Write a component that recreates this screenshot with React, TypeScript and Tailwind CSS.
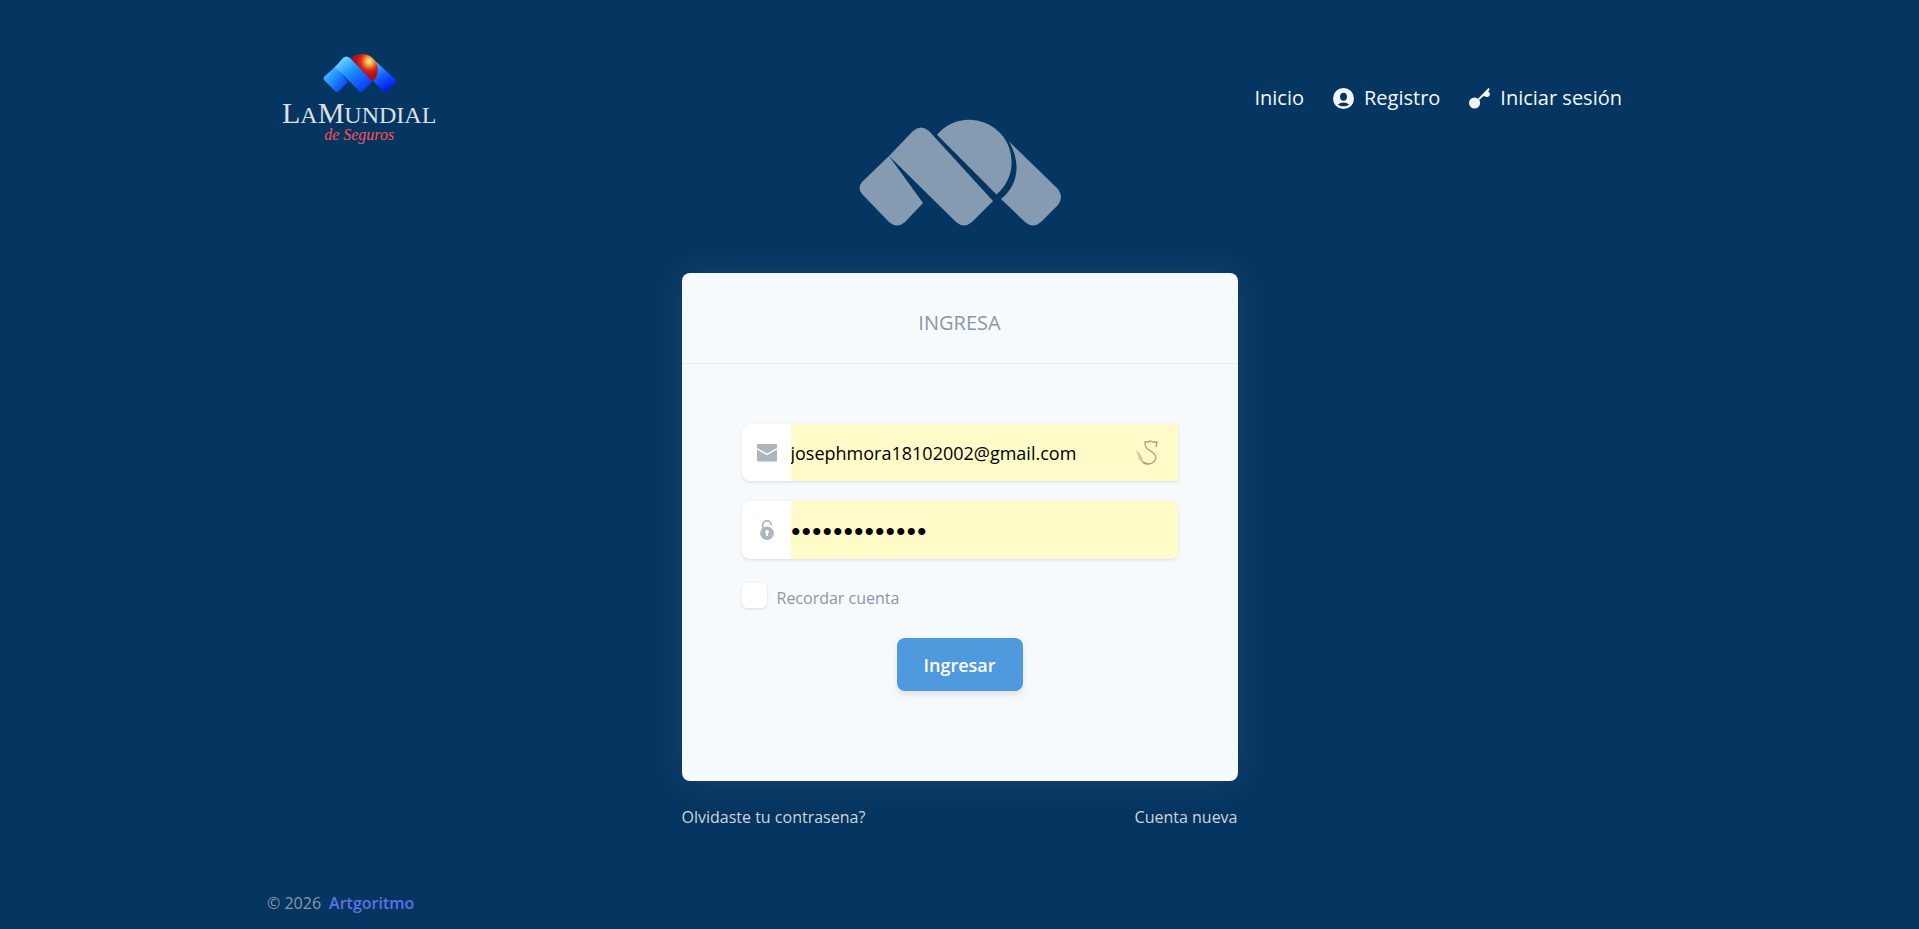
import React from "react";

function MundialLogo() {
  return (
    <a href="#" aria-label="La Mundial de Seguros" className="flex flex-col items-center">
      <svg viewBox="0 0 73 40" className="h-10 w-[73px]" aria-hidden="true">
        <defs>
          <linearGradient id="left" x1="0" y1="0.3" x2="0.8" y2="1">
            <stop offset="0" stopColor="#4fc0ff" />
            <stop offset="0.5" stopColor="#1a84ff" />
            <stop offset="1" stopColor="#0a3cf5" />
          </linearGradient>
          <linearGradient id="mid" x1="0.1" y1="0" x2="0.85" y2="1">
            <stop offset="0" stopColor="#7be4ff" />
            <stop offset="0.45" stopColor="#1a8cff" />
            <stop offset="1" stopColor="#0a2cf5" />
          </linearGradient>
          <linearGradient id="right" x1="0.2" y1="0" x2="0.6" y2="1">
            <stop offset="0" stopColor="#5fc4ff" />
            <stop offset="0.5" stopColor="#0f62ff" />
            <stop offset="1" stopColor="#0510f0" />
          </linearGradient>
          <radialGradient id="sun" cx="0.68" cy="0.26" r="0.5">
            <stop offset="0" stopColor="#fff6c0" />
            <stop offset="0.3" stopColor="#f6a030" />
            <stop offset="0.65" stopColor="#d32a20" />
            <stop offset="1" stopColor="#b50d1c" />
          </radialGradient>
        </defs>
        <path d="M50 6 L72 26 Q74 28 72 30 L64 38 Q62 40 60 38 L50 28Z" fill="url(#right)" />
        <path d="M28 5.500 A15.900 15.900 0 1 1 50 28.500 L49 29Z" fill="url(#sun)" />
        <path d="M13 13 L1 24 Q0 25.500 1 27 L12 38 Q14 40 16 38 L25 29Z" fill="url(#left)" />
        <path d="M12 14 L20 5 Q23 2 27 5 L49.500 28.500 L40 38 Q38 40 36 38Z" fill="url(#mid)" />
      </svg>
      <span className="mt-2 flex items-baseline font-['Liberation_Serif',serif] text-2xl leading-6 text-[#dcdfe3]">
        <span className="text-[30px]">L</span>A<span className="text-[30px]">M</span>UNDIAL
      </span>
      <span className="font-['Liberation_Serif',serif] text-base leading-4 text-[#ff5058] italic">
        de Seguros
      </span>
    </a>
  );
}

function BrandMark() {
  return (
    <svg viewBox="0 0 202 107" className="h-[107px] w-[202px] fill-[#849bb2]" aria-hidden="true">
      <path d="M30 37 L3 63 Q-2 69 3 75 L30 103 Q38 110 46 103 L64 84Z" />
      <path d="M30 37 L54 12 Q62 5 70 12 L134 82 L113 103 Q105 110 97 103Z" />
      <path d="M78 15.800 A42.300 42.300 0 1 1 137.500 75.500Z" />
      <path d="M150 22.500 L199 70 Q205 78 199 86 L182 103 Q174 110 166 103 L142 80 C160 66 162 43 150 22.500Z" />
    </svg>
  );
}

function UserIcon() {
  return (
    <svg viewBox="0 0 20 20" className="size-[21px]" aria-hidden="true">
      <circle cx="10" cy="10" r="10" fill="currentColor" />
      <ellipse cx="10" cy="8.400" rx="3.300" ry="3.800" fill="#053661" />
      <path d="M4.500 15.600 Q10 11.800 15.500 15.600 Q13 17.400 10 17.400 Q7 17.400 4.500 15.600Z" fill="#053661" />
    </svg>
  );
}

function KeyIcon() {
  return (
    <svg viewBox="0 0 20 20" className="size-[21px]" fill="currentColor" aria-hidden="true">
      <circle cx="5.300" cy="14.300" r="5.300" />
      <path d="M8.600 10.200 L18.500 0 L20 1.300 L18.300 3.200 L19.800 4.800 Q20.300 8.300 17 8.600 L13.800 7.500 L9.800 11.400Z" />
    </svg>
  );
}

function MailIcon() {
  return (
    <svg viewBox="0 0 20 18" className="h-[18px] w-5" fill="#adb5bd" aria-hidden="true">
      <path d="M0 4V1Q0 0 1 0h18Q20 0 20 1V4L10 9.500Z" />
      <path d="M0 5.500l10 5.700L20 5.500v11q0 1-1 1h-18Q0 17.500 0 16.500Z" />
    </svg>
  );
}

function LockIcon() {
  return (
    <svg viewBox="0 0 20 20" className="size-5" aria-hidden="true">
      <path d="M5.700 9V5.200a4.300 4.300 0 0 1 8.600 0" fill="none" stroke="#adb5bd" strokeWidth="1.600" />
      <circle cx="10" cy="13.200" r="6.800" fill="#adb5bd" />
      <path d="M10 10a2 2 0 0 1 1 3.700V16H9v-2.300A2 2 0 0 1 10 10Z" fill="#fff" />
    </svg>
  );
}

function ManagerIcon() {
  return (
    <svg viewBox="0 0 22 25" className="h-[25px] w-[22px]" fill="none" aria-hidden="true">
      <path d="M0 10q5 3 7 10q-6-3-7-10Z" fill="#d8cba4" />
      <path d="M3 17q3 6 9 7" stroke="#d3bd9b" strokeWidth="2" />
      <path d="M20 7l1-5-4 0-3-1-2 1-3 0q0 6 4 8q7 4 7 8q-2 6-8 6-3 0-5-2" stroke="#b69788" strokeWidth="1.300" />
    </svg>
  );
}

export default function App() {
  const [email, setEmail] = React.useState("josephmora18102002@gmail.com");
  const [password, setPassword] = React.useState("contrasena123");

  return (
    <div className="flex min-h-screen flex-col bg-[#053661] font-['Open_Sans',sans-serif]">
      <div className="mx-auto flex w-full max-w-[1385px] grow flex-col">
        <header className="flex items-center justify-between pt-[53px] pr-[30px] pl-[15px]">
          <MundialLogo />
          <nav className="flex items-center gap-[29px] text-xl text-[#f4f6fb]">
            <a href="#">Inicio</a>
            <a href="#" className="flex items-center gap-2.5">
              <UserIcon />
              Registro
            </a>
            <a href="#" className="flex items-center gap-2.5">
              <KeyIcon />
              Iniciar sesión
            </a>
          </nav>
        </header>

        <main className="mx-auto -mt-6 flex w-full max-w-[556px] flex-col">
          <div className="flex justify-center">
            <BrandMark />
          </div>
          <section className="mt-[47px] rounded-lg bg-[#f7fafd] shadow-[0_0_40px_rgba(136,152,170,0.15)]">
            <h1 className="border-b border-black/5 pt-[35px] pb-[25px] text-center text-xl leading-[30px] text-[#8898aa]">
              INGRESA
            </h1>
            <form className="flex flex-col px-[60px] pt-[60px] pb-[90px]" onSubmit={(e) => e.preventDefault()}>
              <div className="relative flex h-[57px] overflow-hidden rounded-l-lg bg-white shadow-[0_1px_3px_rgba(50,50,93,0.15)]">
                <label htmlFor="email" aria-label="Email" className="flex w-[49px] shrink-0 items-center pl-[15px]">
                  <MailIcon />
                </label>
                <input
                  id="email"
                  type="email"
                  value={email}
                  onChange={(e) => setEmail(e.target.value)}
                  className="min-w-0 grow bg-[#fffbc8] pr-14 text-lg text-black outline-none"
                />
                <span className="absolute top-4 right-5">
                  <ManagerIcon />
                </span>
              </div>
              <div className="mt-5 flex h-[58px] overflow-hidden rounded-lg bg-white shadow-[0_1px_3px_rgba(50,50,93,0.15)]">
                <label htmlFor="password" aria-label="Contraseña" className="flex w-[49px] shrink-0 items-center pl-[15px]">
                  <LockIcon />
                </label>
                <input
                  id="password"
                  type="password"
                  value={password}
                  onChange={(e) => setPassword(e.target.value)}
                  className="min-w-0 grow bg-[#fffbc8] pt-[3px] font-['Liberation_Serif',serif] text-[30px] text-black outline-none"
                />
              </div>
              <div className="mt-6 flex gap-2.5">
                <input
                  id="remember"
                  type="checkbox"
                  className="size-[25px] appearance-none rounded-[5px] bg-white shadow-[0_1px_3px_rgba(50,50,93,0.15)] checked:bg-[#4e9add]"
                />
                <label htmlFor="remember" className="pt-[3px] text-base leading-6 text-[#8898aa]">
                  Recordar cuenta
                </label>
              </div>
              <button
                type="submit"
                className="mt-7 h-[53px] w-[126px] self-center rounded-lg bg-[#4e9add] text-lg font-semibold text-white shadow-[0_4px_6px_rgba(50,50,93,0.12)]"
              >
                Ingresar
              </button>
            </form>
          </section>
          <div className="mt-6 flex justify-between text-base leading-6 text-[#ced4da]">
            <a href="#">Olvidaste tu contrasena?</a>
            <a href="#">Cuenta nueva</a>
          </div>
        </main>

        <footer className="mt-auto flex gap-2 pb-3.5 text-base leading-6 text-[#8898aa]">
          <span>© 2026</span>
          <a href="#" className="font-semibold text-[#5e72e4]">
            Artgoritmo
          </a>
        </footer>
      </div>
    </div>
  );
}
